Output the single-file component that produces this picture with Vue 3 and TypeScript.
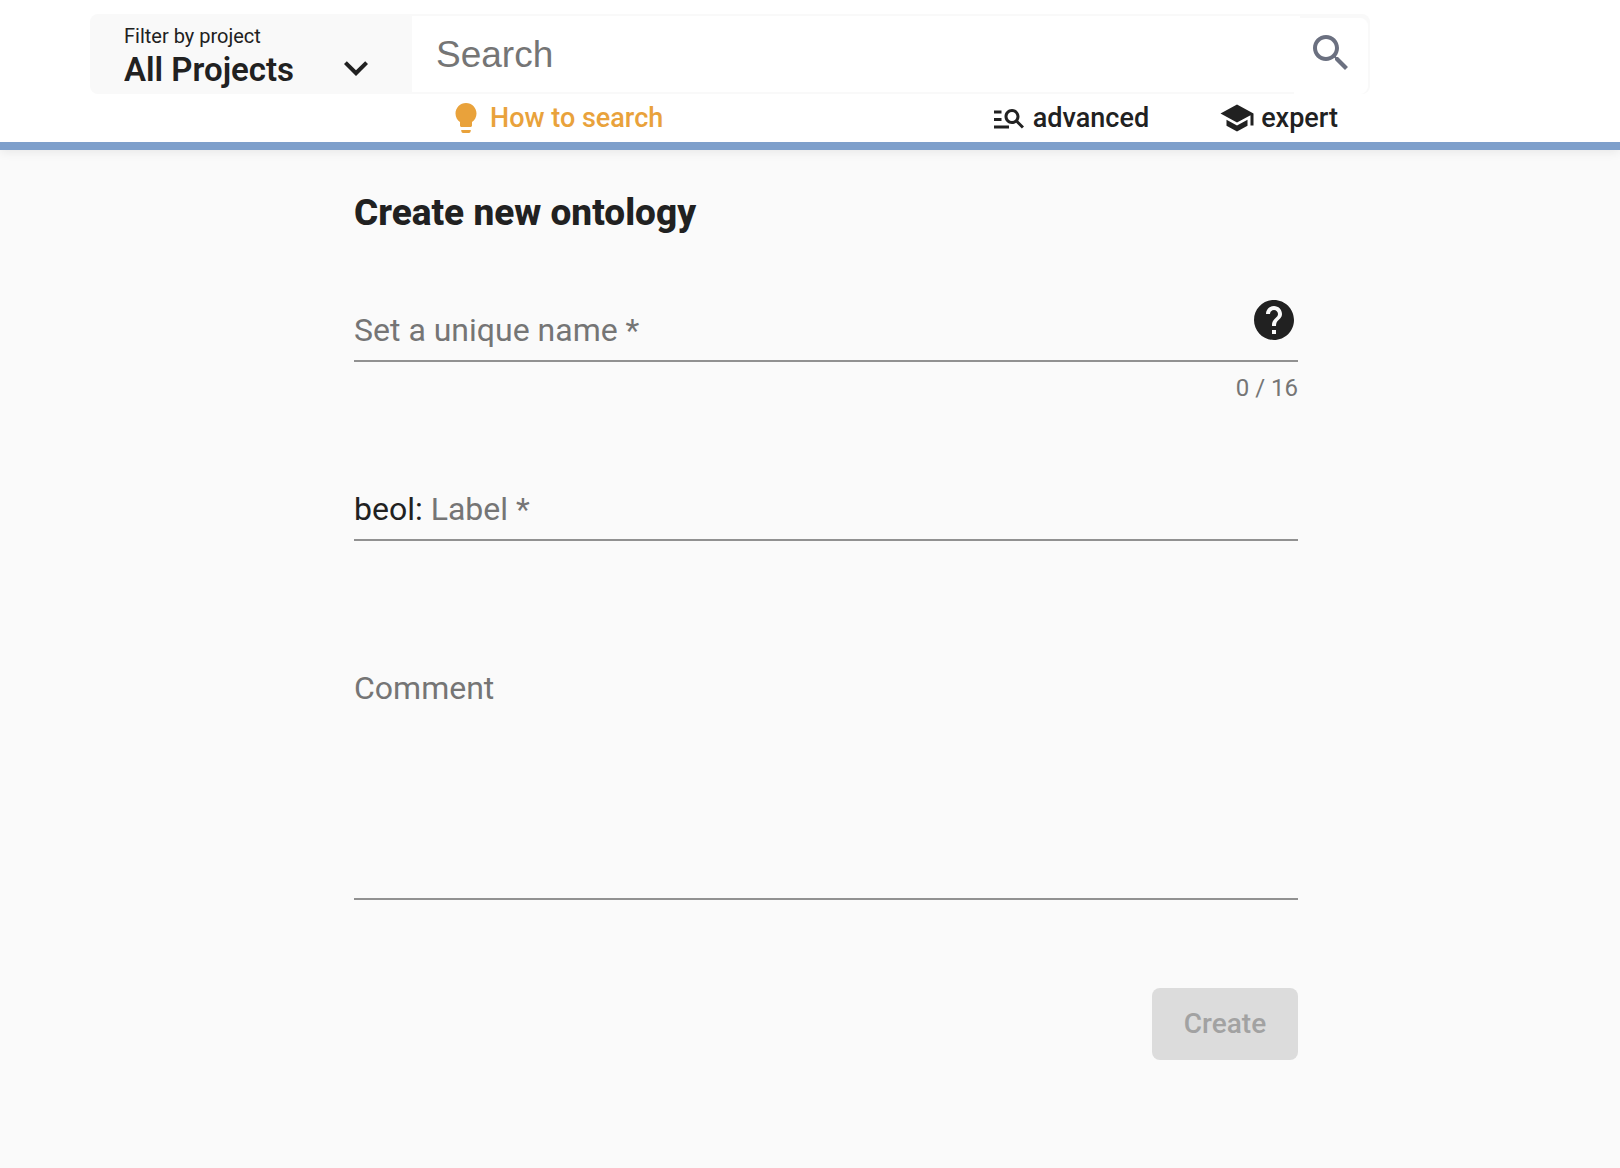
<script setup lang="ts">
import { computed, ref } from 'vue'

const maxNameLength = 16

const project = ref('All Projects')
const query = ref('')
const name = ref('')
const label = ref('')
const comment = ref('')

const canCreate = computed(() => name.value.length > 0 && label.value.length > 0)
</script>

<template>
  <div class="page">
    <header class="header">
      <form class="search-bar" role="search" @submit.prevent>
        <div class="filter">
          <label class="filter-label" for="project">Filter by project</label>
          <div class="filter-control">
            <select id="project" v-model="project" class="filter-select">
              <option>All Projects</option>
            </select>
            <svg class="chevron" viewBox="6 9 12 8" aria-hidden="true">
              <path d="M16.59 8.59 12 13.17 7.41 8.59 6 10l6 6 6-6z" />
            </svg>
          </div>
        </div>
        <input v-model="query" class="search-input" type="search" placeholder="Search" aria-label="Search" />
        <button class="search-button" type="submit" aria-label="Start search">
          <svg class="search-icon" viewBox="0 0 24 24" aria-hidden="true">
            <path d="M15.5 14h-.79l-.28-.27C15.41 12.59 16 11.11 16 9.5 16 5.91 13.09 3 9.5 3S3 5.91 3 9.5 5.91 16 9.5 16c1.61 0 3.09-.59 4.23-1.57l.27.28v.79l5 4.99L20.49 19l-4.99-5zm-6 0C7.01 14 5 11.99 5 9.5S7.01 5 9.5 5 14 7.01 14 9.5 11.99 14 9.5 14z" />
          </svg>
        </button>
      </form>
      <nav class="links">
        <a class="link help-link" href="#help">
          <svg class="link-icon" viewBox="0 0 24 24" aria-hidden="true">
            <path d="M8.800 20h6.400c0 1.300-.5 2-1.200 2h-4c-.7 0-1.200-.7-1.200-2zM12 2C8.140 2 5 5.140 5 9c0 2.380 1.190 4.470 3 5.740V17c0 .55.45 1 1 1h6c.55 0 1-.45 1-1v-2.260c1.810-1.270 3-3.360 3-5.740 0-3.860-3.140-7-7-7z" />
          </svg>
          How to search
        </a>
        <a class="link" href="#advanced">
          <svg class="link-icon" viewBox="0 0 24 24" aria-hidden="true">
            <path d="M7 9H2V7h5v2zm0 3H2v2h5v-2zm13.59 7l-3.83-3.83c-.8.52-1.74.83-2.76.83-2.76 0-5-2.24-5-5s2.24-5 5-5 5 2.24 5 5c0 1.02-.31 1.96-.83 2.75L22 17.59 20.59 19zM17 11c0-1.65-1.35-3-3-3s-3 1.35-3 3 1.35 3 3 3 3-1.35 3-3zM2 19h10v-2H2v2z" />
          </svg>
          advanced
        </a>
        <a class="link" href="#expert">
          <svg class="link-icon" viewBox="0 0 24 24" aria-hidden="true">
            <path d="M5 13.18v4L12 21l7-3.820v-4L12 17l-7-3.820zM12 3 1 9l11 6 9-4.910V17h2V9L12 3z" />
          </svg>
          expert
        </a>
      </nav>
    </header>

    <main class="content">
      <form class="ontology" @submit.prevent>
        <h1 class="title">Create new ontology</h1>

        <div class="field">
          <div class="row">
            <label class="label" for="name">Set a unique name *</label>
            <input id="name" v-model="name" class="input" :maxlength="maxNameLength" />
            <button class="help" type="button" aria-label="Help">
              <svg class="help-icon" viewBox="2 2 20 20" aria-hidden="true">
                <path d="M12 2C6.48 2 2 6.48 2 12s4.480 10 10 10 10-4.480 10-10S17.520 2 12 2zm1 17h-2v-2h2v2zm2.070-7.750-.9.920C13.450 12.900 13 13.500 13 15h-2v-.5c0-1.100.45-2.100 1.170-2.830l1.240-1.260c.37-.36.59-.86.59-1.410 0-1.100-.9-2-2-2s-2 .9-2 2H8c0-2.210 1.790-4 4-4s4 1.790 4 4c0 .88-.36 1.680-.93 2.250z" />
              </svg>
            </button>
          </div>
          <div class="counter">{{ name.length }} / {{ maxNameLength }}</div>
        </div>

        <div class="field">
          <div class="row">
            <span class="prefix">beol:</span>
            <label class="label" for="label">Label *</label>
            <input id="label" v-model="label" class="input" />
          </div>
        </div>

        <div class="area">
          <label class="label" for="comment">Comment</label>
          <textarea id="comment" v-model="comment" class="textarea"></textarea>
        </div>

        <div class="actions">
          <button class="create" type="submit" :disabled="!canCreate">Create</button>
        </div>
      </form>
    </main>
  </div>
</template>

<style>
body {
  margin: 0;
  background: #fafafa;
}
</style>

<style scoped>
.page {
  min-height: 100vh;
  background: #fafafa;
  color: #212121;
  font-family: Roboto, "Liberation Sans", sans-serif;
}

.page * {
  box-sizing: border-box;
}

button,
input,
select,
textarea {
  margin: 0;
  padding: 0;
  border: 0;
  outline: 0;
  background: transparent;
  color: inherit;
  font: inherit;
  appearance: none;
}

svg {
  display: block;
  flex: none;
  fill: currentColor;
}

.header {
  padding: 14px 250px 0 90px;
  border-bottom: 8px solid #7e9fcb;
  background: #fff;
  box-shadow: 0 2px 10px rgba(0, 0, 0, 0.08);
}

.search-bar {
  display: flex;
  height: 80px;
  border-radius: 8px;
  background: #f9f9f9;
}

.filter {
  display: flex;
  flex: none;
  flex-direction: column;
  width: 322px;
  padding: 10px 44px 0 34px;
}

.filter-label {
  font-size: 20px;
  line-height: 24px;
}

.filter-control {
  display: grid;
  align-items: center;
}

.filter-select {
  grid-area: 1 / 1;
  height: 44px;
  font-size: 33px;
  font-weight: 600;
  line-height: 44px;
}

.chevron {
  grid-area: 1 / 1;
  justify-self: end;
  width: 24px;
  height: 16px;
  overflow: visible;
  pointer-events: none;
}

.search-input {
  flex: 1;
  min-width: 0;
  margin: 2px 0;
  padding: 2px 24px 0;
  background: #fff;
  font-family: "Liberation Sans", Arial, sans-serif;
  font-size: 37px;
}

.search-input::placeholder {
  color: #757575;
}

.search-button {
  display: flex;
  flex: none;
  justify-content: center;
  width: 74px;
  margin: 4px 2px 0 -6px;
  padding-top: 11px;
  border-radius: 0 8px 8px 0;
  background: #fff;
  color: #6b7080;
}

.search-icon {
  width: 48px;
  height: 48px;
}

.links {
  display: flex;
  align-items: center;
  gap: 70px;
  height: 48px;
  padding: 0 32px 0 358px;
}

.link {
  display: flex;
  align-items: center;
  gap: 6px;
  color: inherit;
  font-size: 27px;
  font-weight: 500;
  line-height: 34px;
  text-decoration: none;
}

.help-link {
  margin-right: auto;
  color: #e9a23b;
}

.link-icon {
  width: 36px;
  height: 36px;
}

.content {
  padding: 40px 0 64px 32px;
}

.ontology {
  max-width: 944px;
  margin: 0 auto;
  font-size: 32px;
  line-height: 36px;
}

.title {
  margin: 0 0 64px;
  font-size: 37px;
  font-weight: 800;
  line-height: 46px;
}

.field {
  min-height: 179px;
}

.row {
  display: flex;
  align-items: flex-end;
  gap: 8px;
  height: 62px;
  padding-bottom: 12px;
  border-bottom: 2px solid #919191;
}

.label {
  color: #757575;
}

.input {
  flex: 1;
  min-width: 0;
  height: 36px;
}

.help {
  margin: 0 4px 8px 0;
}

.help-icon {
  width: 40px;
  height: 40px;
}

.counter {
  margin-top: 12px;
  color: #757575;
  font-size: 24px;
  line-height: 28px;
  text-align: right;
}

.area {
  display: flex;
  flex-direction: column;
  padding-top: 12px;
  border-bottom: 2px solid #919191;
}

.textarea {
  height: 192px;
  resize: none;
}

.actions {
  display: flex;
  justify-content: flex-end;
  margin-top: 88px;
}

.create {
  width: 146px;
  height: 72px;
  border-radius: 8px;
  background: #7e9fcb;
  font-size: 28px;
  font-weight: 500;
}

.create:disabled {
  background: #dcdcdc;
  color: #a2a2a2;
}
</style>
